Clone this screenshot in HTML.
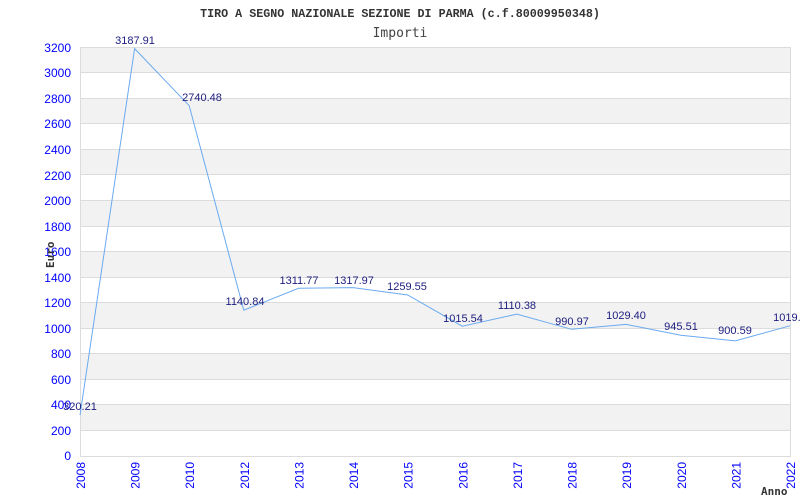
<!DOCTYPE html>
<html><head><style>body{margin:0;background:#fff}svg{display:block}</style></head><body>
<svg width="800" height="500" xmlns="http://www.w3.org/2000/svg">
<rect width="800" height="500" fill="#fff"/>
<g fill="#f2f2f2">
<rect x="80" y="47" width="710" height="25.6"/>
<rect x="80" y="98.1" width="710" height="25.6"/>
<rect x="80" y="149.2" width="710" height="25.6"/>
<rect x="80" y="200.4" width="710" height="25.6"/>
<rect x="80" y="251.5" width="710" height="25.6"/>
<rect x="80" y="302.6" width="710" height="25.6"/>
<rect x="80" y="353.8" width="710" height="25.6"/>
<rect x="80" y="404.9" width="710" height="25.6"/>
</g>
<g stroke="#dcdcdc" stroke-width="1" fill="none">
<path d="M80 47.5H790M80 72.5H790M80 98.5H790M80 123.5H790M80 149.5H790M80 174.5H790M80 200.5H790M80 226.5H790M80 251.5H790M80 277.5H790M80 302.5H790M80 328.5H790M80 353.5H790M80 379.5H790M80 404.5H790M80 430.5H790"/>
<path d="M80.5 47V456.5H790.5V47"/>
</g>
<g font-family="Liberation Sans, sans-serif" font-size="12" fill="#0000ff" text-anchor="end">
<text x="71" y="52">3200</text><text x="71" y="77">3000</text><text x="71" y="103">2800</text><text x="71" y="128">2600</text><text x="71" y="154">2400</text><text x="71" y="180">2200</text><text x="71" y="205">2000</text><text x="71" y="231">1800</text><text x="71" y="256">1600</text><text x="71" y="282">1400</text><text x="71" y="307">1200</text><text x="71" y="333">1000</text><text x="71" y="358">800</text><text x="71" y="384">600</text><text x="71" y="409">400</text><text x="71" y="435">200</text><text x="71" y="460">0</text>
</g>
<g font-family="Liberation Sans, sans-serif" font-size="12" fill="#0000ff" text-anchor="end">
<text transform="translate(85,462) rotate(-90)">2008</text>
<text transform="translate(139.6,462) rotate(-90)">2009</text>
<text transform="translate(194.2,462) rotate(-90)">2010</text>
<text transform="translate(248.8,462) rotate(-90)">2012</text>
<text transform="translate(303.5,462) rotate(-90)">2013</text>
<text transform="translate(358.1,462) rotate(-90)">2014</text>
<text transform="translate(412.7,462) rotate(-90)">2015</text>
<text transform="translate(467.3,462) rotate(-90)">2016</text>
<text transform="translate(521.9,462) rotate(-90)">2017</text>
<text transform="translate(576.5,462) rotate(-90)">2018</text>
<text transform="translate(631.2,462) rotate(-90)">2019</text>
<text transform="translate(685.8,462) rotate(-90)">2020</text>
<text transform="translate(740.4,462) rotate(-90)">2021</text>
<text transform="translate(795,462) rotate(-90)">2022</text>
</g>
<polyline fill="none" stroke="#6aaaf0" stroke-width="1" points="80,415.1 134.6,48.6 189.2,105.7 243.8,310.2 298.5,288.3 353.1,287.6 407.7,295 462.3,326.2 516.9,314.1 571.5,329.3 626.2,324.4 680.8,335.2 735.4,340.9 790,325.8"/>
<g font-family="Liberation Sans, sans-serif" font-size="11" fill="#1c1c80" text-anchor="middle">
<text x="135" y="44">3187.91</text>
<text x="202" y="101">2740.48</text>
<text x="245" y="305">1140.84</text>
<text x="299" y="284">1311.77</text>
<text x="354" y="284">1317.97</text>
<text x="407" y="290">1259.55</text>
<text x="463" y="322">1015.54</text>
<text x="517" y="309">1110.38</text>
<text x="572" y="325">990.97</text>
<text x="626" y="319">1029.40</text>
<text x="681" y="330">945.51</text>
<text x="735" y="334">900.59</text>
<text x="790" y="321">1019.1</text>
<text x="80" y="410">320.21</text>
</g>
<text x="400" y="17" font-family="Liberation Mono, monospace" font-size="11.7" font-weight="bold" fill="#333" text-anchor="middle">TIRO A SEGNO NAZIONALE SEZIONE DI PARMA (c.f.80009950348)</text>
<text x="400" y="37" font-family="DejaVu Sans Mono, monospace" font-size="13" fill="#444" text-anchor="middle">Importi</text>
<text transform="translate(54,268) rotate(-90)" font-family="DejaVu Sans Mono, monospace" font-size="11" font-weight="bold" fill="#333">Euro</text>
<text x="761" y="495" font-family="DejaVu Sans Mono, monospace" font-size="11" font-weight="bold" fill="#333">Anno</text>
</svg>
</body></html>
